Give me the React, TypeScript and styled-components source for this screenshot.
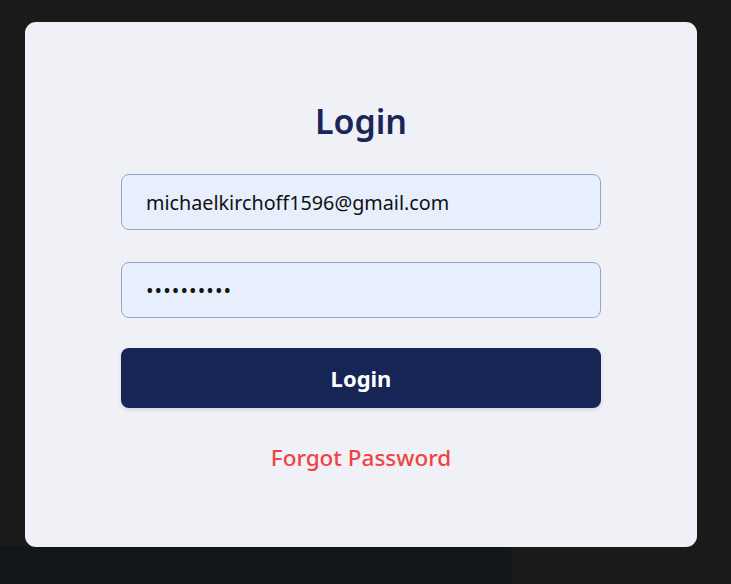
import styled, { createGlobalStyle } from 'styled-components';

const GlobalStyle = createGlobalStyle`
  html, body {
    margin: 0;
    padding: 0;
    background: #1a1a1b;
    font-family: "Noto Sans", "Open Sans", sans-serif;
  }
  * { box-sizing: border-box; }
`;

const Page = styled.div`
  min-height: 584px;
  padding: 22px 34px 37px 25px;
  background: linear-gradient(#121619, #121619) 0 100% / 70% 38px no-repeat, #1a1a1b;
  display: flex;
  align-items: flex-start;
`;

const Card = styled.div`
  width: 672px;
  height: 525px;
  background: #f0f1f6;
  border-radius: 11px;
  display: flex;
  flex-direction: column;
  align-items: center;
  padding-top: 75px;
`;

const Title = styled.h1`
  margin: 0 0 29px;
  font-size: 34px;
  line-height: 48px;
  font-weight: 600;
  color: #1a2659;
`;

const Form = styled.form`
  width: 480px;
  display: flex;
  flex-direction: column;
  gap: 32px;
`;

const Input = styled.input<{ $spaced?: boolean }>`
  width: 100%;
  height: 56px;
  padding: 0 24px;
  border: 1px solid #94a6c4;
  border-radius: 8px;
  background: #e8effc;
  font-family: inherit;
  font-size: ${(p) => (p.$spaced ? '20px' : '19.75px')};
  letter-spacing: ${(p) => (p.$spaced ? '1.1px' : 'normal')};
  color: #111;
  outline: none;
`;

const Button = styled.button`
  height: 60px;
  margin-top: -2px;
  border: none;
  border-radius: 8px;
  background: #172456;
  color: #fff;
  font-family: inherit;
  font-size: 22px;
  font-weight: 700;
  box-shadow: 0 2px 4px rgba(0, 0, 0, 0.12);
  cursor: pointer;
`;

const Forgot = styled.a`
  margin-top: 34px;
  font-size: 22.5px;
  font-weight: 500;
  color: #ef4444;
  text-decoration: none;
  cursor: pointer;
`;

export default function App() {
  return (
    <>
      <GlobalStyle />
      <Page>
        <Card>
          <Title>Login</Title>
          <Form onSubmit={(e) => e.preventDefault()}>
            <Input type="email" defaultValue="michaelkirchoff1596@gmail.com" />
            <Input type="password" $spaced defaultValue="1234567890" />
            <Button type="submit">Login</Button>
          </Form>
          <Forgot>Forgot Password</Forgot>
        </Card>
      </Page>
    </>
  );
}
